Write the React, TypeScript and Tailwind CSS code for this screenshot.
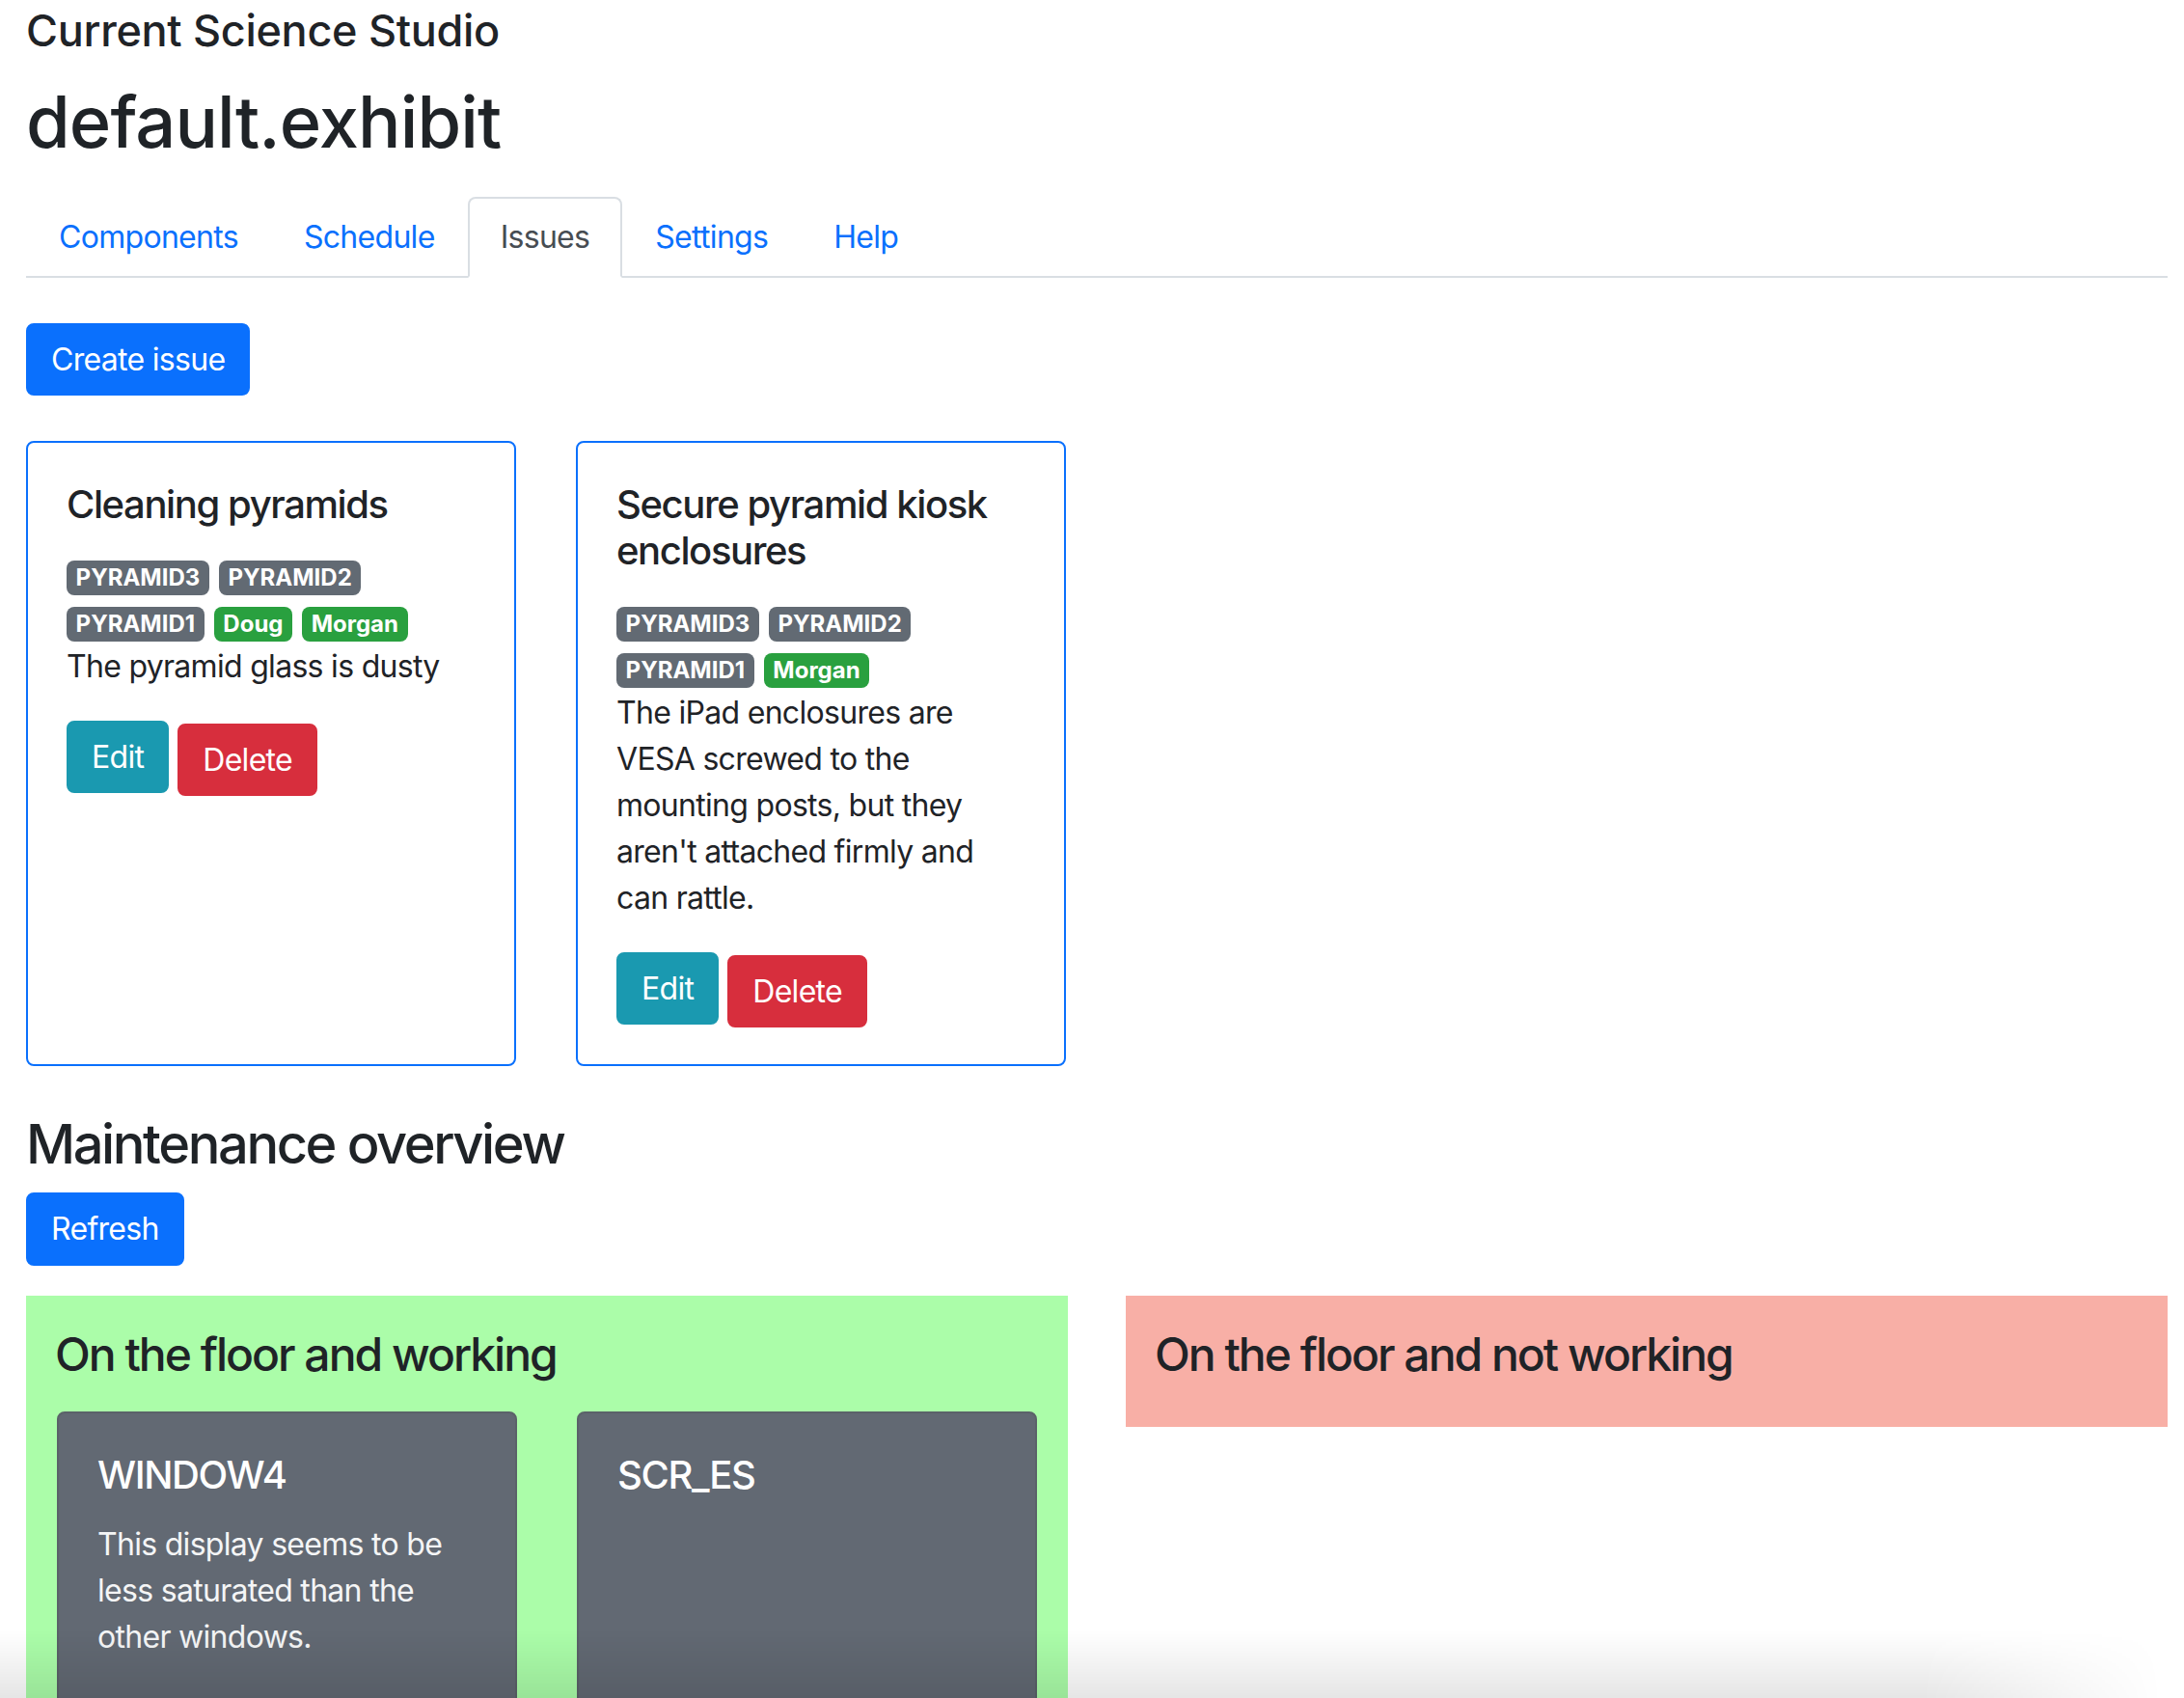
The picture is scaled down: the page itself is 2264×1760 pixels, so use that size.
import React from 'react'

const tabs = ['Components', 'Schedule', 'Issues', 'Settings', 'Help']

type Issue = {
  title: string
  components: string[]
  people: string[]
  text: string
}

const issues: Issue[] = [
  {
    title: 'Cleaning pyramids',
    components: ['PYRAMID3', 'PYRAMID2', 'PYRAMID1'],
    people: ['Doug', 'Morgan'],
    text: 'The pyramid glass is dusty',
  },
  {
    title: 'Secure pyramid kiosk enclosures',
    components: ['PYRAMID3', 'PYRAMID2', 'PYRAMID1'],
    people: ['Morgan'],
    text: "The iPad enclosures are VESA screwed to the mounting posts, but they aren't attached firmly and can rattle.",
  },
]

const working = [
  { id: 'WINDOW4', notes: 'This display seems to be less saturated than the other windows.' },
  { id: 'SCR_ES', notes: '' },
]

function Badge({ label, tone }: { label: string; tone: 'gray' | 'green' }) {
  return (
    <span
      className={
        'inline-block h-[36px] px-[9.6px] py-[6px] text-[24px] leading-[24px] font-bold rounded-[8px] text-white ' +
        (tone === 'gray' ? 'bg-[#626a73]' : 'bg-[#29a03f]')
      }
    >
      {label}
    </span>
  )
}

function IssueCard({ issue }: { issue: Issue }) {
  return (
    <div className="w-[508px] border-2 border-[#0a70fd] rounded-[8px] px-[40px] pt-[40px] pb-[38px]">
      <h5 className="text-[40px] leading-[48px] font-medium tracking-[-1.4px] mb-[24px]">{issue.title}</h5>
      <div className="flex flex-wrap gap-x-[10px] gap-y-[12px] pt-[10px] pb-[2px]">
        {issue.components.map((c) => (
          <Badge key={c} label={c} tone="gray" />
        ))}
        {issue.people.map((p) => (
          <Badge key={p} label={p} tone="green" />
        ))}
      </div>
      <p className="text-[32px] leading-[48px] tracking-[-0.7px] mb-[32px]">{issue.text}</p>
      <div className="flex items-start gap-[9px]">
        <button className="h-[75px] px-[24px] rounded-[8px] border-2 border-[#1a99b0] bg-[#1a99b0] text-white text-[32px] leading-[48px] tracking-[-0.7px]">
          Edit
        </button>
        <button className="mt-[3px] h-[75px] px-[24px] rounded-[8px] border-2 border-[#d72e3d] bg-[#d72e3d] text-white text-[32px] leading-[48px] tracking-[-0.7px]">
          Delete
        </button>
      </div>
    </div>
  )
}

export default function App() {
  return (
    <div className="relative h-[1760px] overflow-hidden bg-white pl-[27px] pr-[17px] text-[#1f2327] font-[Inter,sans-serif]">
      <p className="pt-[5px] text-[45px] leading-[54px] font-medium tracking-[-0.3px]">Current Science Studio</p>
      <h1 className="mt-[23px] text-[74px] leading-[89px] font-medium tracking-[-0.9px]">default.exhibit</h1>

      {/* Tabs */}
      <div className="mt-[33px] flex border-b-2 border-[#d9dee3]">
        {tabs.map((t) =>
          t === 'Issues' ? (
            <div
              key={t}
              className="-mb-[2px] px-[32px] py-[16px] border-2 border-[#d9dee3] border-b-white rounded-t-[8px] bg-white text-[#474d53] text-[32px] leading-[48px] tracking-[-0.7px]"
            >
              {t}
            </div>
          ) : (
            <div
              key={t}
              className="-mb-[2px] px-[32px] py-[16px] border-2 border-transparent text-[#0a70fd] text-[32px] leading-[48px] tracking-[-0.7px]"
            >
              {t}
            </div>
          )
        )}
      </div>

      <button className="mt-[47px] h-[75px] px-[24px] rounded-[8px] border-2 border-[#0a70fd] bg-[#0a70fd] text-white text-[32px] leading-[48px] tracking-[-0.7px]">
        Create issue
      </button>

      {/* Issues */}
      <div className="mt-[47px] flex items-stretch gap-[62px]">
        {issues.map((i) => (
          <IssueCard key={i.title} issue={i} />
        ))}
      </div>

      <h3 className="mt-[48px] mb-[16px] text-[56px] leading-[67px] font-medium tracking-[-2.4px]">Maintenance overview</h3>
      <button className="h-[76px] px-[24px] rounded-[8px] border-2 border-[#0a70fd] bg-[#0a70fd] text-white text-[32px] leading-[48px] tracking-[-0.7px]">
        Refresh
      </button>

      {/* Overview panels */}
      <div className="mt-[31px] flex items-start gap-[60px]">
        <div className="w-[1080px] bg-[#abfda9] pt-[32px] px-[30px] pb-[40px]">
          <h4 className="text-[48px] leading-[58px] font-medium tracking-[-2px] mb-[30px]">On the floor and working</h4>
          <div className="ml-[2px] flex gap-[62px]">
            {working.map((w) => (
              <div
                key={w.id}
                className="w-[477px] h-[360px] rounded-[8px] border-2 border-[#5b6269] bg-[#626973] p-[40px] text-white"
              >
                <h5 className="text-[40px] leading-[48px] font-medium tracking-[-1.4px] mb-[24px]">{w.id}</h5>
                {w.notes && (
                  <p className="text-[32px] leading-[48px] tracking-[-0.7px] text-[#f4f5f6]">{w.notes}</p>
                )}
              </div>
            ))}
          </div>
        </div>
        <div className="w-[1080px] bg-[#f8afa6] pt-[32px] px-[30px] pb-[30px]">
          <h4 className="text-[48px] leading-[58px] font-medium tracking-[-2px] mb-[16px]">On the floor and not working</h4>
        </div>
      </div>

      {/* bottom shadow */}
      <div className="pointer-events-none absolute inset-x-0 bottom-0 h-[70px] bg-linear-to-b from-transparent to-black/10 [mask-image:linear-gradient(to_right,black_88%,transparent_99%)]" />
    </div>
  )
}
